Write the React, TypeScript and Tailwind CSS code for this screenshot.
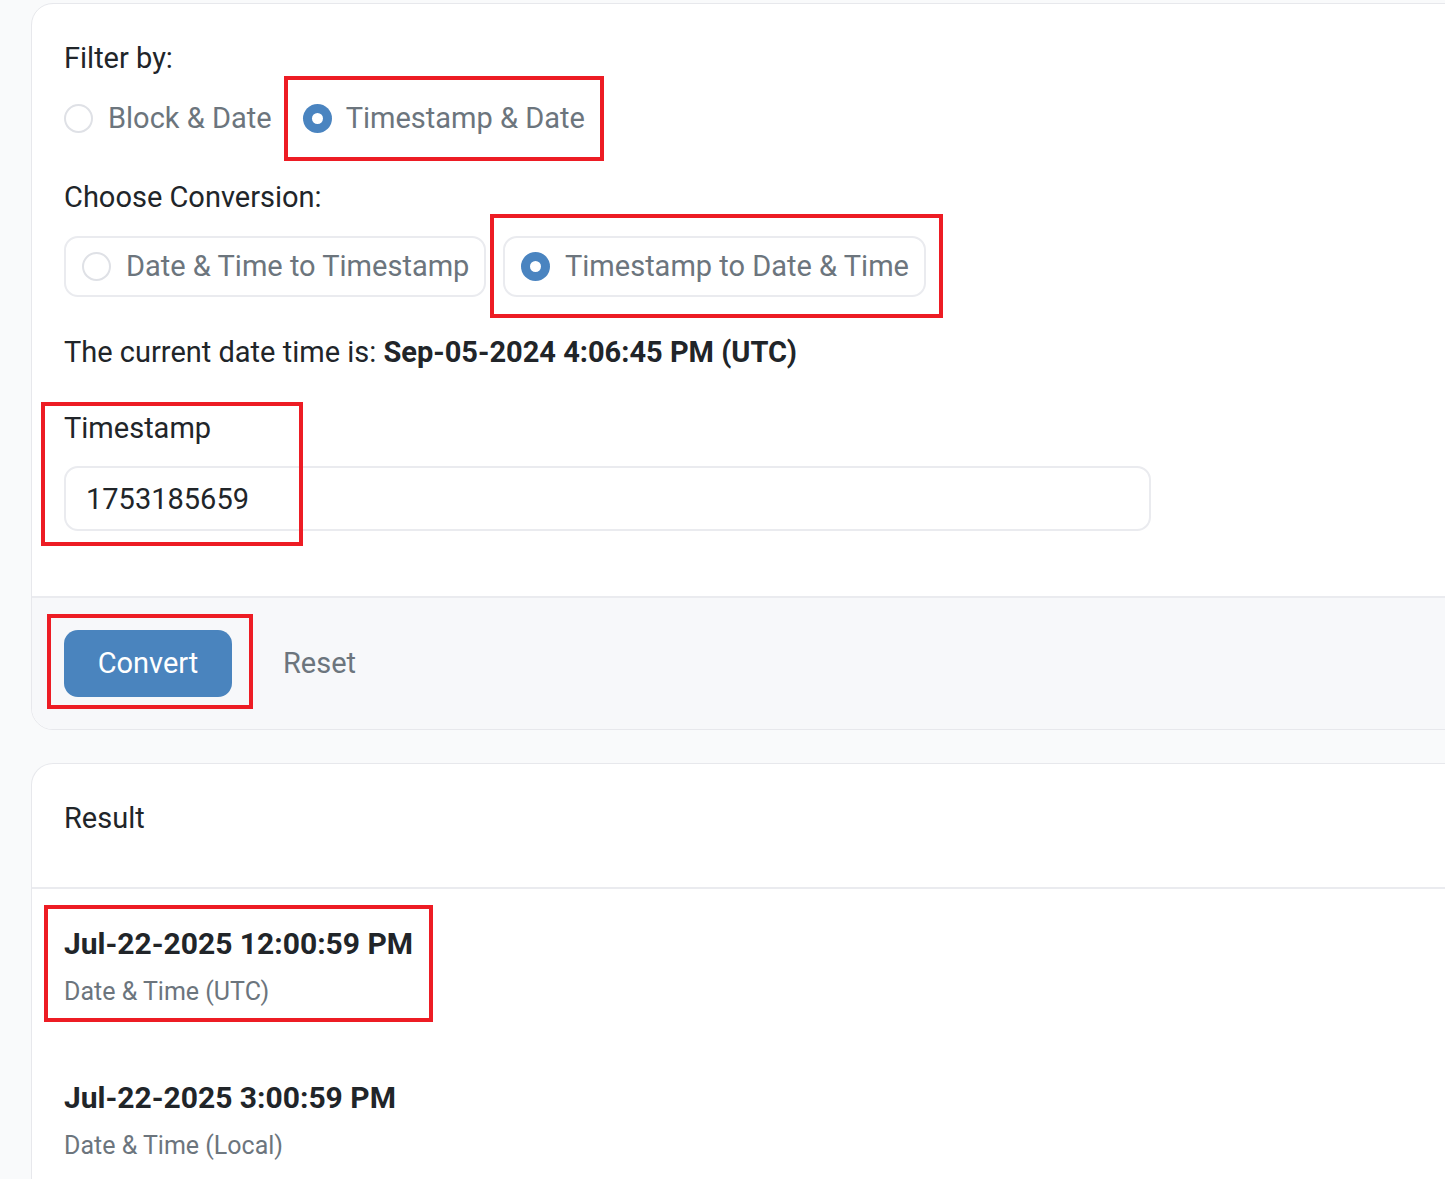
const Radio = ({ checked }: { checked?: boolean }) =>
  checked ? (
    <span className="flex h-[29px] w-[29px] shrink-0 items-center justify-center rounded-full bg-[#4a84c0]">
      <span className="h-[11px] w-[11px] rounded-full bg-white" />
    </span>
  ) : (
    <span className="h-[29px] w-[29px] shrink-0 rounded-full border-2 border-[#dfe1e6] bg-white" />
  );

const Mark = ({ className }: { className: string }) => (
  <div className={`pointer-events-none absolute border-4 border-[#ed1c24] ${className}`} />
);

export default function App() {
  return (
    <div className="relative min-h-screen overflow-hidden bg-[#f9fafb] pl-[31px] pt-[3px] font-['Roboto',sans-serif] text-[29px] text-[#212529]">
      {/* Converter card */}
      <div className="w-[1450px] overflow-hidden rounded-l-[22px] border border-[#e7e8ec] bg-white">
        <div className="pl-[32px] pt-[33px] pb-[65px]">
          <div className="leading-[42px]">Filter by:</div>
          <div className="mt-[18px] flex items-center leading-[42px] text-[#6c757d]">
            <Radio />
            <span className="ml-[15px]">Block &amp; Date</span>
            <span className="ml-[31px]">
              <Radio checked />
            </span>
            <span className="ml-[14px]">Timestamp &amp; Date</span>
          </div>

          <div className="mt-[37px] leading-[42px]">Choose Conversion:</div>
          <div className="mt-[18px] flex gap-[17px] text-[#6c757d]">
            <div className="flex h-[61px] w-[422px] items-center gap-[15px] rounded-[14px] border-2 border-[#eaebef] pl-[16px]">
              <Radio />
              <span>Date &amp; Time to Timestamp</span>
            </div>
            <div className="flex h-[61px] w-[423px] items-center gap-[15px] rounded-[14px] border-2 border-[#eaebef] pl-[16px]">
              <Radio checked />
              <span>Timestamp to Date &amp; Time</span>
            </div>
          </div>

          <div className="mt-[34px] leading-[42px]">
            The current date time is: <span className="font-bold">Sep-05-2024 4:06:45 PM (UTC)</span>
          </div>

          <div className="mt-[34px] leading-[42px]">Timestamp</div>
          <input
            readOnly
            value="1753185659"
            className="mt-[17px] h-[65px] w-[1087px] rounded-[14px] border-2 border-[#eaebef] pl-[20px] text-[29px] text-[#212529] outline-none"
          />
        </div>

        <div className="flex items-center border-t-2 border-[#eaebef] bg-[#f7f8fa] pl-[32px] pt-[32px] pb-[32px]">
          <button className="h-[67px] w-[168px] rounded-[14px] bg-[#4a84be] text-white">Convert</button>
          <button className="ml-[51px] text-[#6c757d]">Reset</button>
        </div>
      </div>

      {/* Result card */}
      <div className="mt-[33px] w-[1450px] rounded-tl-[22px] border border-b-0 border-[#e7e8ec] bg-white">
        <div className="border-b-2 border-[#eaebef] pl-[32px] pt-[33px] pb-[48px] leading-[42px]">Result</div>
        <div className="pl-[32px] pt-[34px] pb-[40px]">
          <div className="text-[30px] font-bold leading-[42px]">Jul-22-2025 12:00:59 PM</div>
          <div className="mt-[9px] text-[25px] leading-[36px] text-[#6c757d]">Date &amp; Time (UTC)</div>
          <div className="mt-[67px] text-[30px] font-bold leading-[42px]">Jul-22-2025 3:00:59 PM</div>
          <div className="mt-[9px] text-[25px] leading-[36px] text-[#6c757d]">Date &amp; Time (Local)</div>
        </div>
      </div>

      {/* annotation boxes */}
      <Mark className="left-[284px] top-[76px] h-[85px] w-[320px]" />
      <Mark className="left-[490px] top-[214px] h-[104px] w-[453px]" />
      <Mark className="left-[41px] top-[402px] h-[144px] w-[262px]" />
      <Mark className="left-[47px] top-[614px] h-[95px] w-[206px]" />
      <Mark className="left-[44px] top-[905px] h-[117px] w-[389px]" />
    </div>
  );
}
